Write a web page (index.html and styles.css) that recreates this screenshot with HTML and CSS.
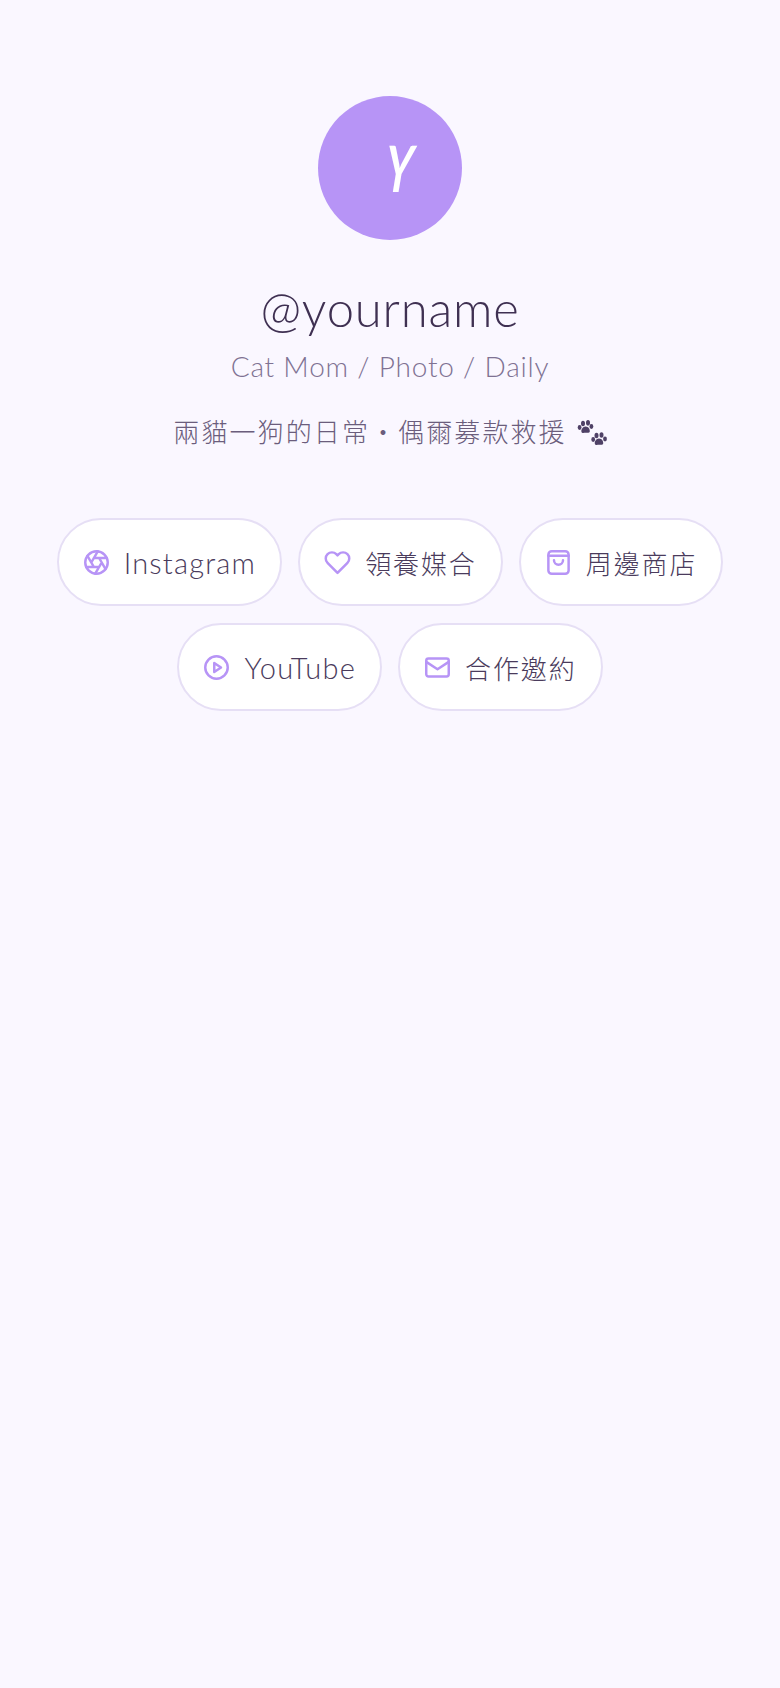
FILE: index.html
```html
<!DOCTYPE HTML>
<html>
<head>
    <title>@yourname</title>
    <link rel="stylesheet" href="styles.css">
</head>
<body>
    <div class="page">
        <div class="avatar"><span class="avatar-letter">Y</span></div>
        <h1 class="name">@yourname</h1>
        <p class="role">Cat Mom / Photo / Daily</p>
        <p class="bio">
            兩貓一狗的日常・偶爾募款救援
            <svg class="paw" viewBox="0 0 30 28">
                <ellipse cx="6" cy="3.5" rx="2" ry="2.8"/><ellipse cx="11" cy="2.8" rx="2" ry="2.8"/><ellipse cx="2.6" cy="7.5" rx="1.9" ry="2.4"/><ellipse cx="14.4" cy="6.5" rx="1.9" ry="2.4"/>
                <path d="M8.6 6.500c3 0 4.600 3 4.200 5-.4 1.700-2.200 1.200-4 1.200s-3.800.8-4.300-.8c-.6-2 1.100-5.400 4.100-5.400z"/>
                <ellipse cx="19.500" cy="15.500" rx="2" ry="2.800"/><ellipse cx="24.500" cy="15" rx="2" ry="2.800"/><ellipse cx="16.200" cy="19.500" rx="1.900" ry="2.400"/><ellipse cx="28" cy="19" rx="1.900" ry="2.400"/>
                <path d="M22 18.500c3 0 4.600 3 4.200 5-.4 1.700-2.200 1.200-4 1.200s-3.800.8-4.300-.8c-.6-2 1.100-5.400 4.100-5.400z"/>
            </svg>
        </p>
        <div class="links">
            <a class="pill">
                <svg class="icon" viewBox="0 0 24 24"><circle cx="12" cy="12" r="10"/><path d="M14.31 8l5.74 9.94M9.69 8h11.48M7.38 12l5.74-9.94M9.69 16L3.95 6.06M14.31 16H2.83M16.62 12l-5.74 9.94"/></svg>
                Instagram
            </a>
            <a class="pill zh">
                <svg class="icon" viewBox="0 0 24 24"><path d="M20.84 4.61a5.5 5.5 0 0 0-7.78 0L12 5.67l-1.06-1.06a5.5 5.5 0 0 0-7.78 7.78l1.06 1.06L12 21.23l7.78-7.78 1.06-1.06a5.500 5.500 0 0 0 0-7.780z"/></svg>
                領養媒合
            </a>
            <a class="pill zh">
                <svg class="icon" viewBox="0 0 24 24"><rect x="3" y="2" width="18" height="20" rx="3"/><path d="M3 6h18"/><path d="M16 10a4 4 0 0 1-8 0"/></svg>
                周邊商店
            </a>
            <a class="pill">
                <svg class="icon" viewBox="0 0 24 24"><circle cx="12" cy="12" r="10"/><path d="M10 8l6 4-6 4z"/></svg>
                YouTube
            </a>
            <a class="pill zh">
                <svg class="icon" viewBox="0 0 24 24"><rect x="2" y="4" width="20" height="16" rx="2"/><path d="M22 7l-10 6.500L2 7"/></svg>
                合作邀約
            </a>
        </div>
    </div>
</body>
</html>
```

FILE: styles.css
```css
body{
    margin: 0;
    background-color: #faf7ff;
    font-family: "Lato", "Noto Sans CJK TC", sans-serif;
    color: #4a3b5c;
}
.page{
    min-height: 1688px;
    box-sizing: border-box;
    padding-top: 96px;
    display: flex;
    flex-direction: column;
    align-items: center;
}
.avatar{
    width: 144px;
    height: 144px;
    border-radius: 50%;
    background-color: #b794f6;
    display: flex;
    align-items: center;
    justify-content: center;
}
.avatar-letter{
    color: #fff;
    font-size: 64px;
    font-weight: 700;
    line-height: 1;
    transform: translateX(10px) scaleX(0.66) skewX(-14deg);
}
.name{
    margin: 38px 0 0;
    font-size: 49px;
    font-weight: 300;
    line-height: 60px;
    letter-spacing: 0.8px;
    color: #3f3052;
}
.role{
    margin: 8px 0 0;
    font-size: 28px;
    line-height: 40px;
    letter-spacing: 0.8px;
    font-weight: 300;
    color: #7f7293;
}
.bio{
    margin: 24px 0 0;
    display: flex;
    align-items: center;
    gap: 10px;
    font-size: 26px;
    line-height: 44px;
    letter-spacing: 2.1px;
    font-weight: 300;
    color: #6b5d7c;
}
.paw{
    width: 30px;
    height: 28px;
    fill: #4f4166;
    margin-top: 4px;
}
.links{
    margin-top: 64px;
    width: 680px;
    display: flex;
    flex-wrap: wrap;
    justify-content: center;
    gap: 17px 16px;
}
.pill{
    height: 88px;
    box-sizing: border-box;
    padding: 0 24px;
    display: flex;
    align-items: center;
    gap: 14px;
    background-color: #fff;
    border: 2px solid #e6dff5;
    border-radius: 44px;
    font-size: 29px;
    font-weight: 300;
    letter-spacing: 1.2px;
    color: #4a3b5c;
}
.pill.zh{
    font-size: 26px;
    letter-spacing: 1.9px;
}
.icon{
    width: 27px;
    height: 27px;
    fill: none;
    stroke: #b794f6;
    stroke-width: 2.2;
    stroke-linecap: round;
    stroke-linejoin: round;
}
```
